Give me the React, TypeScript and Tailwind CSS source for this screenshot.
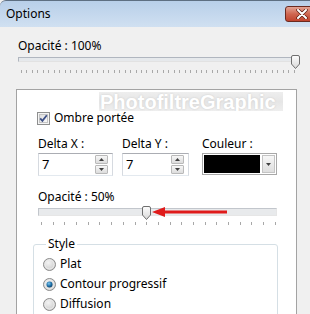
import React from "react";

const Thumb = () => (
  <svg width="9" height="14" viewBox="0 0 9 14">
    <defs>
      <linearGradient id="thumbFill" x1="0" y1="0" x2="0" y2="1">
        <stop offset="0" stopColor="#fdfdfd" />
        <stop offset="1" stopColor="#d8d8d8" />
      </linearGradient>
    </defs>
    <path
      d="M2 .5h5A1.5 1.5 0 0 1 8.5 2v7L4.5 13.5.5 9V2A1.5 1.5 0 0 1 2 .5z"
      fill="url(#thumbFill)"
      stroke="#6f6f6f"
    />
  </svg>
);

const Ticks = ({ count, className }: { count: number; className: string }) => (
  <div className={`flex justify-between ${className}`}>
    {Array.from({ length: count }).map((_, i) => (
      <div key={i} className="h-[3px] w-px bg-[#a8a8a8]" />
    ))}
  </div>
);

const SpinBtn = ({ up }: { up?: boolean }) => (
  <div className="flex h-[9px] w-[13px] items-center justify-center rounded-[1px] border border-[#b9b9b9] bg-gradient-to-b from-[#f7f7f7] to-[#dcdcdc]">
    <svg width="5" height="3" viewBox="0 0 5 3">
      <path d={up ? "M0 3L2.5 0 5 3z" : "M0 0h5L2.5 3z"} fill="#404040" />
    </svg>
  </div>
);

const Spin = ({ value, w }: { value: string; w: string }) => (
  <div
    className={`flex h-[23px] items-center border border-[#abadb3] border-x-[#d6dae0] border-b-[#e3e9ef] bg-white pl-[3px] pr-[4px] ${w}`}
  >
    <span className="flex-1 text-[13px] leading-none">{value}</span>
    <div className="flex flex-col gap-[1px]">
      <SpinBtn up />
      <SpinBtn />
    </div>
  </div>
);

const Radio = ({ checked }: { checked?: boolean }) => (
  <svg width="13" height="13" viewBox="0 0 13 13">
    <defs>
      <radialGradient id="radioFill" cx="0.4" cy="0.35" r="0.7">
        <stop offset="0" stopColor="#f4f4f4" />
        <stop offset="1" stopColor="#c9c9c9" />
      </radialGradient>
      <radialGradient id="radioDot" cx="0.4" cy="0.35" r="0.7">
        <stop offset="0" stopColor="#7fc6ee" />
        <stop offset="0.6" stopColor="#1d6ea6" />
        <stop offset="1" stopColor="#0d3f66" />
      </radialGradient>
    </defs>
    <circle cx="6.5" cy="6.5" r="6" fill="url(#radioFill)" stroke="#8c8c8c" />
    <circle cx="6.5" cy="6.5" r="4.5" fill="none" stroke="#ececec" />
    {checked && <circle cx="6.5" cy="6.5" r="3" fill="url(#radioDot)" />}
  </svg>
);

export default function App() {
  return (
    <div className="relative h-[314px] w-[310px] overflow-hidden bg-[#f0f0f0] font-['Noto_Sans',sans-serif] text-[12px] leading-[16px] text-black">
      <div className="flex h-[27px] items-center justify-between overflow-hidden rounded-tl-[6px] border-t border-[#5e6f82] bg-gradient-to-b from-[#b8cfe9] to-[#d0e0f1] pl-[6px]">
        <span>Options</span>
        <div className="mr-[-8px] flex h-[16px] w-[33px] shrink-0 items-center justify-center rounded-[3px] border border-[#6b2a20] bg-gradient-to-b from-[#e2a394] via-[#cf6650] to-[#c0432d]">
          <svg width="12" height="10" viewBox="0 0 12 10">
            <path d="M2 1l8 8M10 1L2 9" stroke="#5a1a10" strokeWidth="3.4" strokeLinecap="round" />
            <path d="M2 1l8 8M10 1L2 9" stroke="#ffffff" strokeWidth="2" strokeLinecap="round" />
          </svg>
        </div>
      </div>

      <div className="pl-[18px] pt-[11px]">
        <div>Opacité : 100%</div>
        <div className="relative mt-[3px] h-[5px] w-[278px] border border-[#b0b6bf] border-b-[#e2e2e2] border-r-[#e2e2e2] bg-[#e6e9ec]">
          <div className="absolute left-[272px] top-[-3px]">
            <Thumb />
          </div>
        </div>
        <Ticks count={51} className="ml-[3px] mt-[8px] w-[274px]" />

        <div className="relative ml-[-2px] mt-[16px] h-[240px] w-[281px] border border-[#a3a3a3] bg-white pl-[21px] pt-[20px]">
          <div className="absolute left-[82px] top-[2px] flex h-[19px] w-[184px] items-center overflow-hidden bg-gradient-to-b from-[#eeeeee] via-[#e6e6e6] to-[#eeeeee]">
            <span className="ml-[1px] whitespace-nowrap font-['Liberation_Sans',sans-serif] text-[20px] font-bold leading-none tracking-[0px] text-white [text-shadow:0_0_2px_#c8c8c8]">
              PhotofiltreGraphic
            </span>
          </div>

          <div className="flex items-center gap-[4px]">
            <svg width="13" height="13" viewBox="0 0 13 13" className="ml-[-1px]">
              <defs>
                <linearGradient id="cbFill" x1="0" y1="0" x2="1" y2="1">
                  <stop offset="0" stopColor="#dcdcdc" />
                  <stop offset="1" stopColor="#fbfbfb" />
                </linearGradient>
              </defs>
              <rect x="0.5" y="0.5" width="12" height="12" fill="#f4f4f4" stroke="#8e8f8f" />
              <rect x="2.5" y="2.5" width="8" height="8" fill="url(#cbFill)" stroke="#c4c4c4" />
              <path d="M3.2 6.4l2.2 2.4 4.4-5.6" fill="none" stroke="#3c4f86" strokeWidth="1.8" />
            </svg>
            <span>Ombre portée</span>
          </div>

          <div className="mt-[10px] flex">
            <div className="flex w-[75px] flex-col">
              <span>Delta X :</span>
              <div className="mt-[1px]">
                <Spin value="7" w="w-[75px]" />
              </div>
            </div>
            <div className="ml-[9px] flex w-[67px] flex-col">
              <span>Delta Y :</span>
              <div className="mt-[1px]">
                <Spin value="7" w="w-[67px]" />
              </div>
            </div>
            <div className="ml-[13px] flex w-[75px] flex-col">
              <span>Couleur :</span>
              <div className="mt-[1px] flex h-[22px] w-[75px] items-center gap-[2px] border border-[#a8a8a8] bg-white p-[1px]">
                <div className="h-full flex-1 bg-black" />
                <div className="flex h-full w-[13px] items-center justify-center border border-[#c4c4c4] bg-gradient-to-b from-[#f7f7f7] to-[#dedede]">
                  <svg width="5" height="3" viewBox="0 0 5 3">
                    <path d="M0 0h5L2.5 3z" fill="#404040" />
                  </svg>
                </div>
              </div>
            </div>
          </div>

          <div className="mt-[13px]">Opacité : 50%</div>
          <div className="relative mt-[3px] h-[8px] w-[239px] border border-[#c2c6cc] border-b-[#e6e6e6] border-r-[#e6e6e6] bg-[#e8eaec]">
            <div className="absolute left-[103px] top-[-3px]">
              <Thumb />
            </div>
            <svg width="80" height="12" viewBox="0 0 80 12" className="absolute left-[113px] top-[-3px]">
              <path d="M0 6L13 1v3.5h62v3H13V11z" fill="#e01b1b" />
            </svg>
          </div>
          <Ticks count={21} className="ml-[3px] mt-[6px] w-[235px]" />

          <fieldset className="ml-[-5px] mt-[11px] w-[245px] rounded-[3px] border border-[#d5dfe5] pb-[10px] pl-[9px] pt-[2px]">
            <legend className="ml-[3px] px-[2px]">Style</legend>
            <div className="flex h-[20px] items-center gap-[4px]">
              <Radio />
              <span>Plat</span>
            </div>
            <div className="flex h-[20px] items-center gap-[4px]">
              <Radio checked />
              <span>Contour progressif</span>
            </div>
            <div className="flex h-[20px] items-center gap-[4px]">
              <Radio />
              <span>Diffusion</span>
            </div>
          </fieldset>
        </div>
      </div>
    </div>
  );
}
